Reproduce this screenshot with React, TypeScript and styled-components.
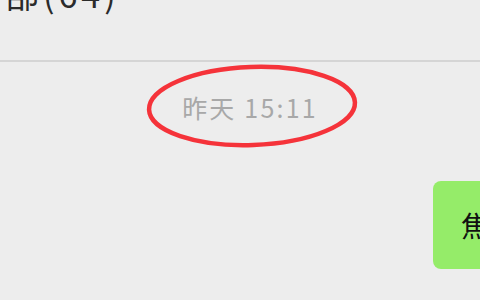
import React from "react";
import styled, { createGlobalStyle } from "styled-components";

const Global = createGlobalStyle`
  html, body { margin: 0; padding: 0; background: #ededed; }
  body { width: 480px; height: 300px; overflow: hidden; font-family: "Noto Sans CJK SC", "Noto Sans", sans-serif; }
`;

const Page = styled.div`
  position: relative;
  width: 480px;
  height: 300px;
  overflow: hidden;
  background: #ededed;
  display: flex;
  flex-direction: column;
`;

const Header = styled.div`
  height: 62px;
  border-bottom: 2px solid #d5d5d5;
  box-sizing: border-box;
  overflow: hidden;
  position: relative;
`;

const Title = styled.div`
  margin-top: -26px;
  margin-left: -33px;
  font-size: 34px;
  letter-spacing: 4px;
  line-height: 40px;
  color: #2b2b2b;
  white-space: nowrap;
`;

const Chat = styled.div`
  flex: 1;
  display: flex;
  flex-direction: column;
`;

const Time = styled.div`
  margin-top: 29px;
  text-align: center;
  font-size: 25px;
  letter-spacing: 2.2px;
  line-height: 32px;
  color: #a8a8a8;
  padding-left: 20px;
`;

const Row = styled.div`
  margin-top: 58px;
  display: flex;
  justify-content: flex-start;
  padding-left: 433px;
`;

const Bubble = styled.div`
  background: #95ec69;
  border-radius: 8px;
  height: 88px;
  padding: 0 20px 0 28px;
  display: flex;
  align-items: center;
  font-size: 28px;
  color: #111;
  white-space: nowrap;
`;

const Mark = styled.svg`
  position: absolute;
  left: 0;
  top: 0;
  pointer-events: none;
`;

export default function App() {
  return (
    <>
      <Global />
      <Page>
        <Header>
          <Title>全部(64)</Title>
        </Header>
        <Chat>
          <Time>昨天 15:11</Time>
          <Row>
            <Bubble>焦虑</Bubble>
          </Row>
        </Chat>
        <Mark width="480" height="300" viewBox="0 0 480 300">
          <ellipse cx="252" cy="106" rx="103" ry="39" fill="none" stroke="#f5333a" strokeWidth="4.5" transform="rotate(-2 252 106)" />
        </Mark>
      </Page>
    </>
  );
}
